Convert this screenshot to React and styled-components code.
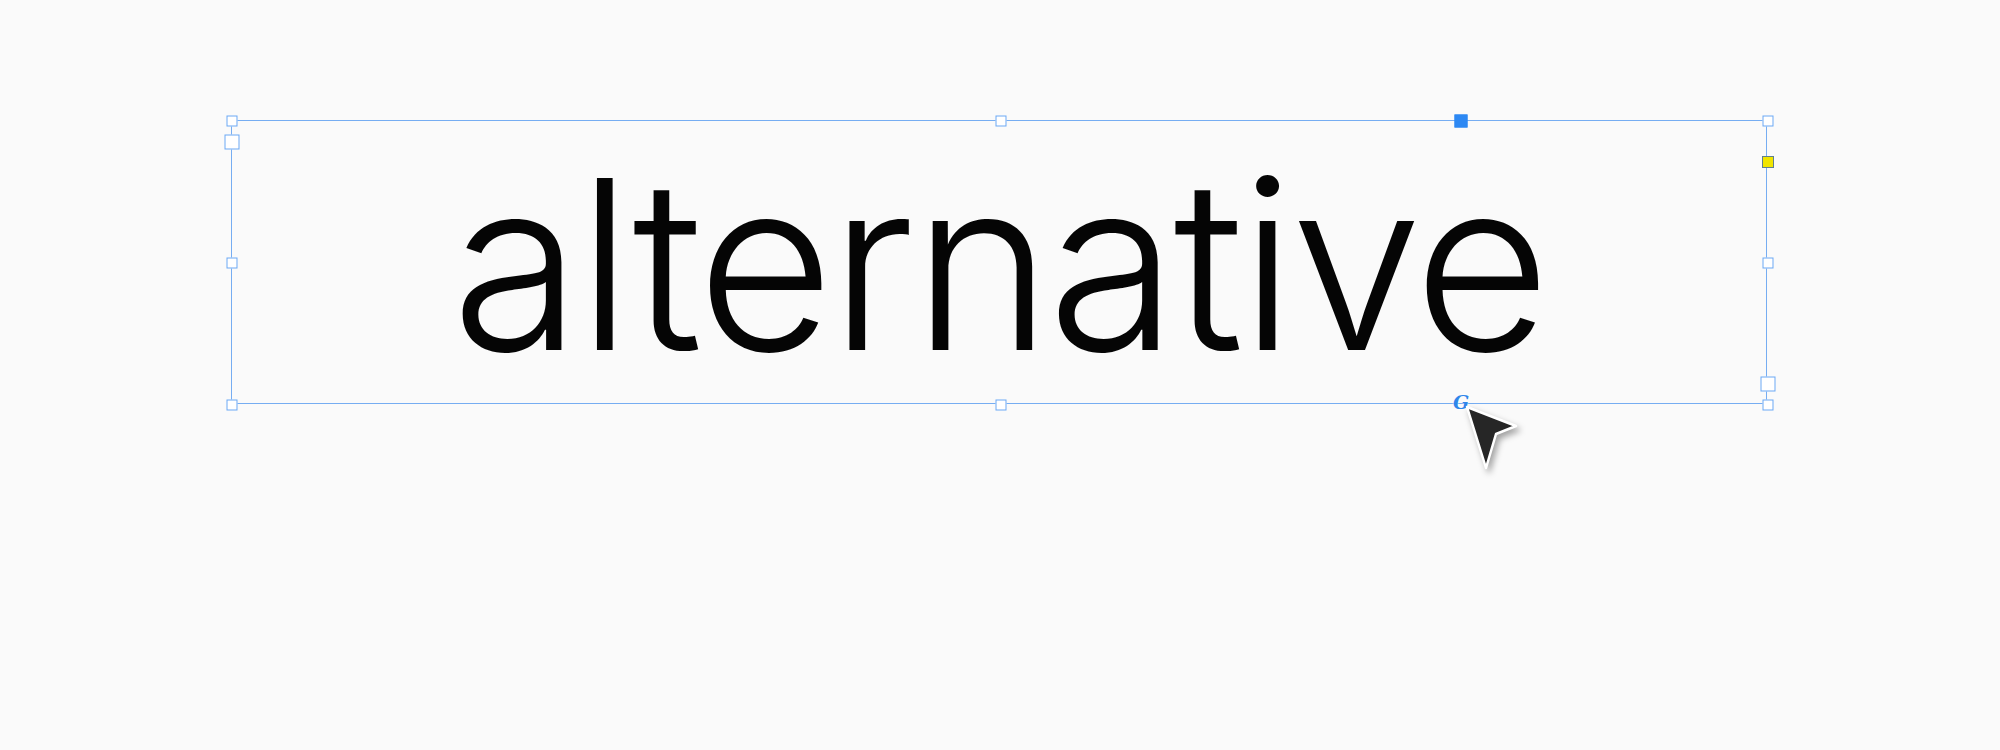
import React from "react";
import styled, { createGlobalStyle } from "styled-components";

const Global = createGlobalStyle`
  html, body { margin: 0; padding: 0; background: #fafafa; }
  body { width: 2000px; height: 750px; overflow: hidden; font-family: Inter, "Liberation Sans", sans-serif; }
`;

const Canvas = styled.main`
  width: 2000px;
  height: 750px;
  box-sizing: border-box;
  padding: 120px 0 0 231px;
  background: #fafafa;
`;

const Frame = styled.div`
  position: relative;
  width: 1536px;
  height: 284px;
  box-sizing: border-box;
  border: 1px solid #76adf2;
  display: flex;
  justify-content: center;
  align-items: flex-start;
  padding: 25px 0 0 0;
`;

const Word = styled.span`
  font-family: Inter, "Liberation Sans", sans-serif;
  font-size: 236px;
  font-weight: 300;
  line-height: 1;
  color: #050505;
  letter-spacing: -4px;
`;

const Handle = styled.span`
  position: absolute;
  left: ${(p) => p.$x}px;
  top: ${(p) => p.$y}px;
  width: ${(p) => p.$size}px;
  height: ${(p) => p.$size}px;
  transform: translate(-50%, -50%);
  box-sizing: border-box;
  background: ${(p) => p.$fill || "#ffffff"};
  border: 1.5px solid ${(p) => p.$stroke || "#6aa7f3"};
`;

const Cursor = styled.svg`
  position: absolute;
  left: 1226px;
  top: 278px;
  overflow: visible;
  filter: drop-shadow(3px 4px 3px rgba(0, 0, 0, 0.35));
`;

const Glyph = styled.span`
  position: absolute;
  left: 1221px;
  top: 272px;
  font-family: "DejaVu Serif", serif;
  font-style: italic;
  font-weight: 700;
  font-size: 19px;
  line-height: 1;
  color: #2f86ea;
  text-shadow: 0 0 2px #fff;
`;

const handles = [
  { x: 0, y: 0, s: 11 },
  { x: 769, y: 0, s: 11 },
  { x: 1536, y: 0, s: 11 },
  { x: 0, y: 142, s: 11 },
  { x: 1536, y: 142, s: 11 },
  { x: 0, y: 284, s: 11 },
  { x: 769, y: 284, s: 11 },
  { x: 1536, y: 284, s: 11 },
  { x: 0, y: 21, s: 15 },
  { x: 1536, y: 263, s: 15 },
  { x: 1229, y: 0, s: 13, fill: "#2d88f3", stroke: "#2d88f3" },
  { x: 1536, y: 41, s: 12, fill: "#f0e500", stroke: "#5f7f8f" },
];

export default function App() {
  return (
    <>
      <Global />
      <Canvas>
        <Frame>
          <Word>alternative</Word>
          {handles.map((h, i) => (
            <Handle key={i} $x={h.x} $y={h.y} $size={h.s} $fill={h.fill} $stroke={h.stroke} />
          ))}
          <Glyph>G</Glyph>
          <Cursor width="60" height="75" viewBox="0 0 60 75">
            <path
              d="M9 8 L58 27 L38 35 L28 69 Z"
              fill="#262626"
              stroke="#ffffff"
              strokeWidth="2.5"
              strokeLinejoin="round"
            />
          </Cursor>
        </Frame>
      </Canvas>
    </>
  );
}
